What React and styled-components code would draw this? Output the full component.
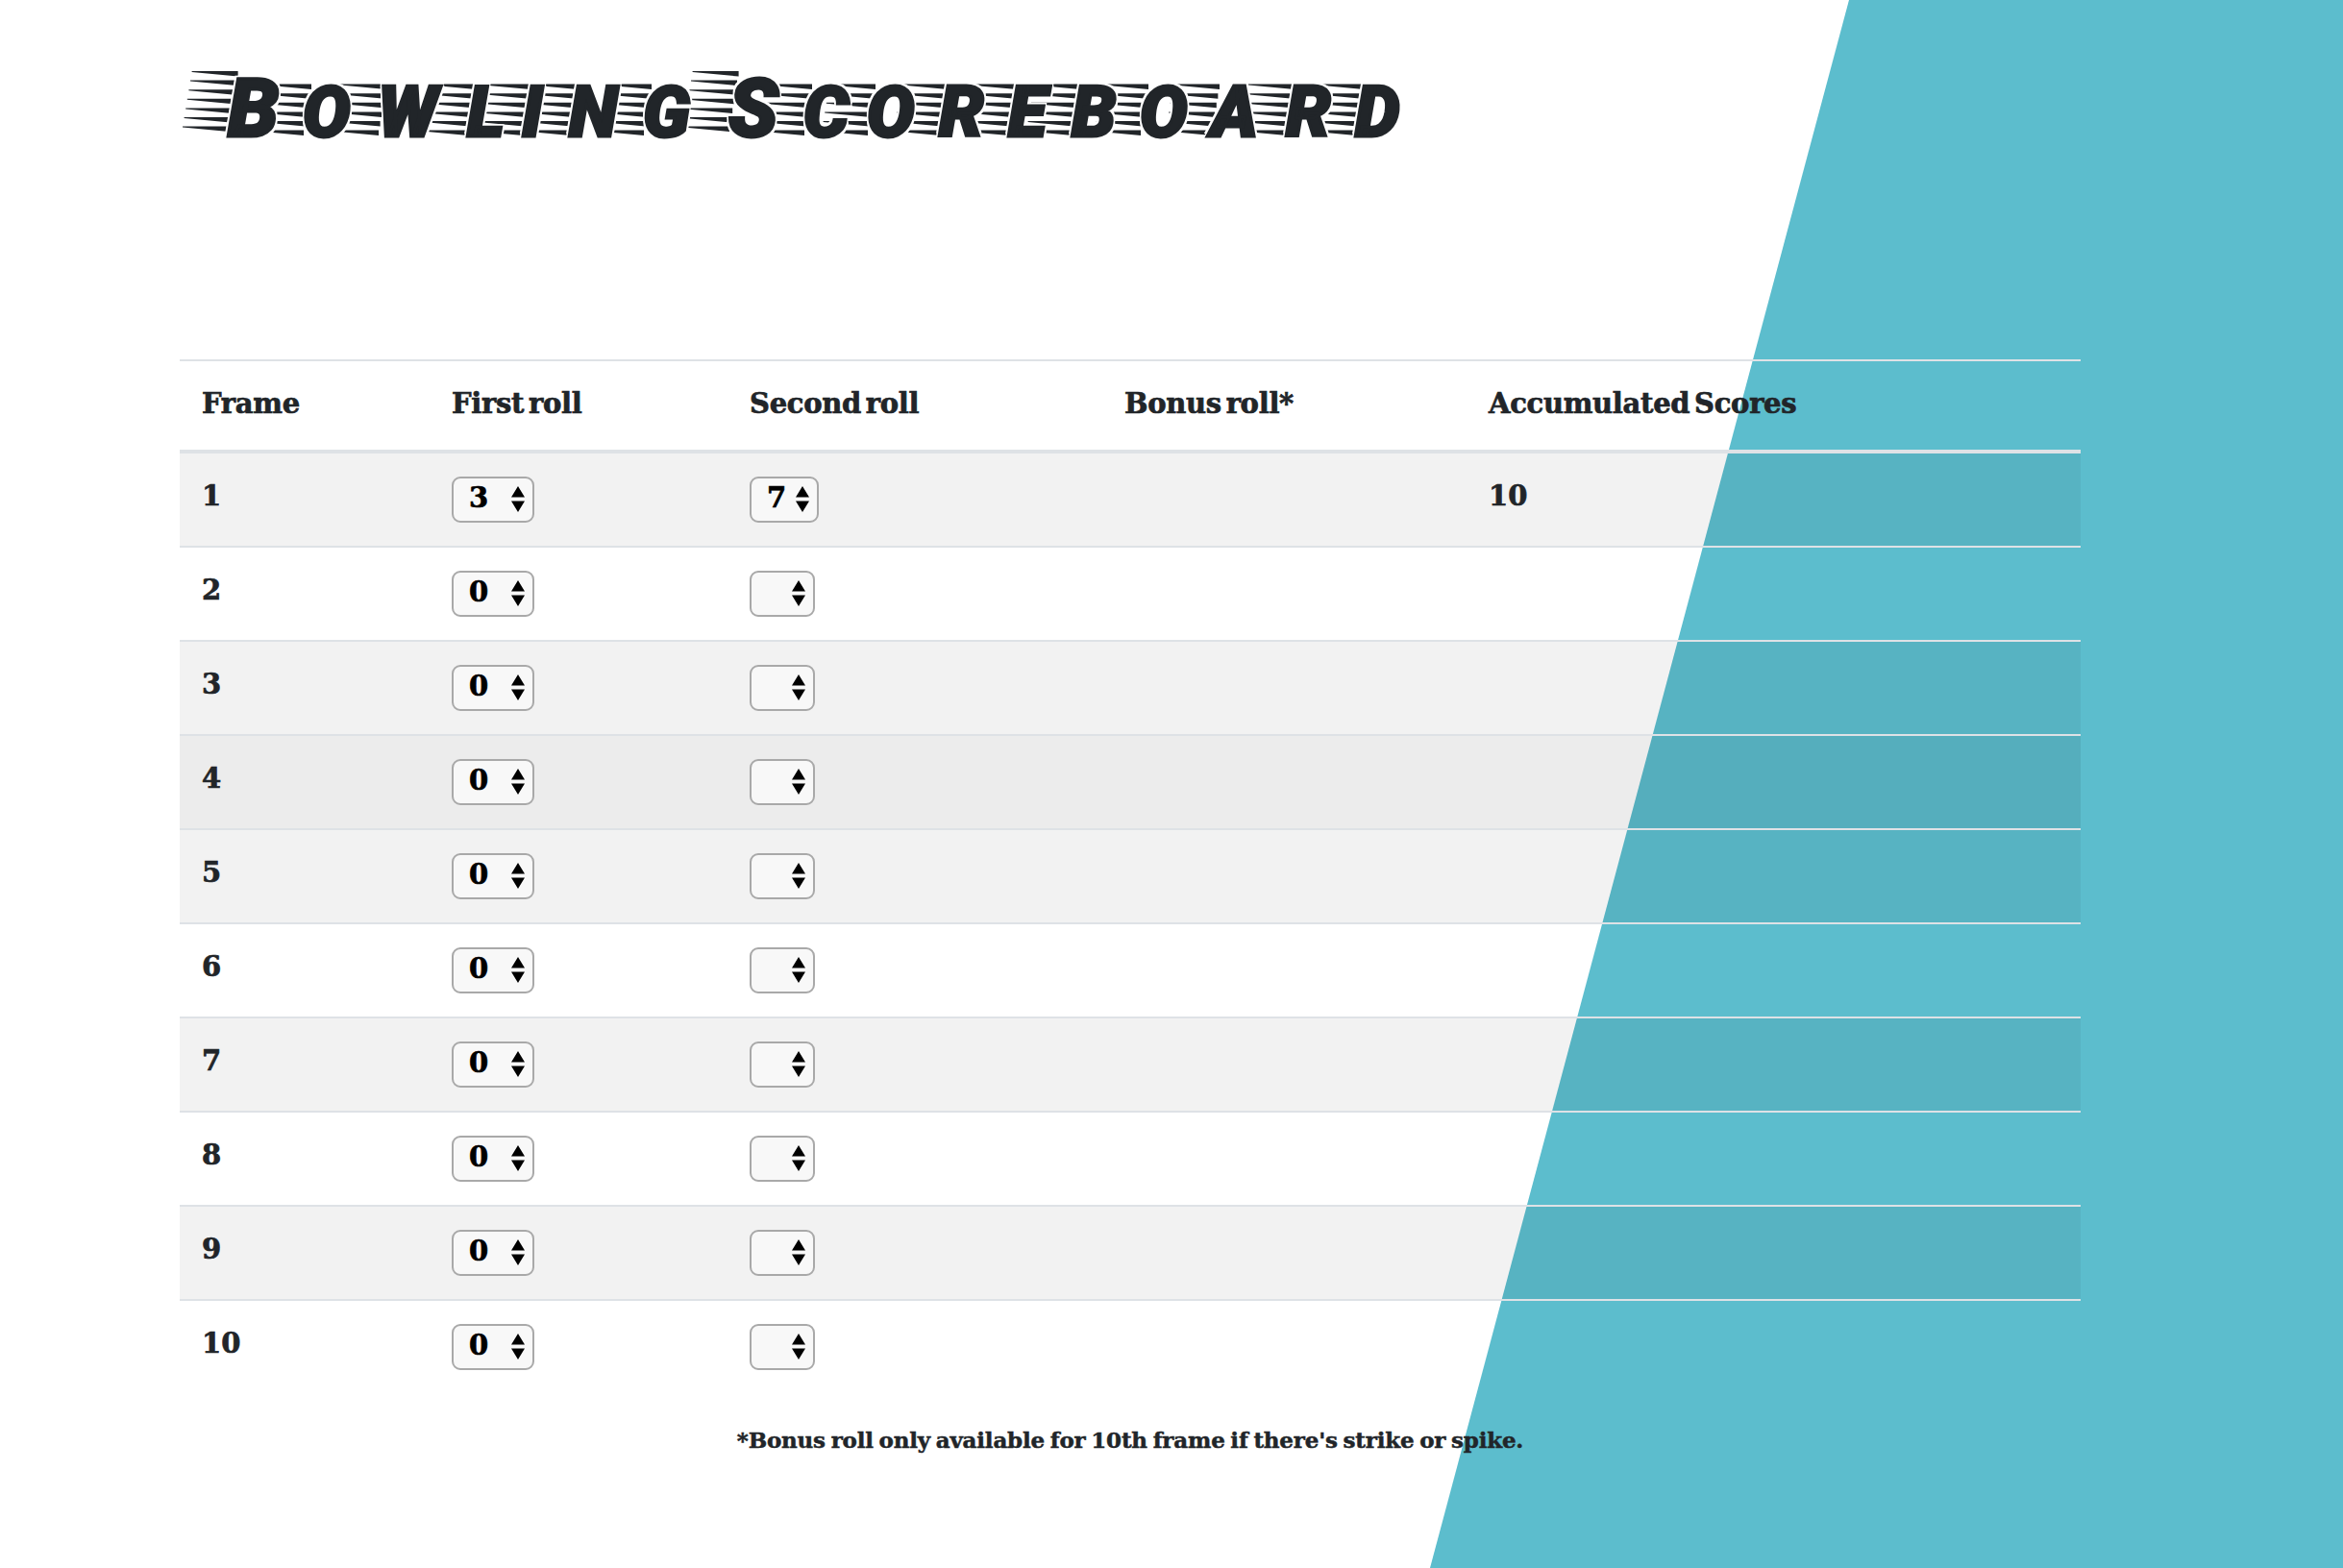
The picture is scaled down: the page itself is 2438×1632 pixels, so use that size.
import React from 'react';
import styled, { createGlobalStyle } from 'styled-components';

const GlobalStyle = createGlobalStyle`
	html, body {
		margin: 0;
		padding: 0;
		background: #fff;
	}
`

const Page = styled.div`
	position: relative;
	box-sizing: border-box;
	width: 2438px;
	height: 1632px;
	padding: 0 273px 0 187px;
	overflow: hidden;
	font-family: "DejaVu Serif", "Liberation Serif", serif;
	font-weight: 700;
	color: #212529;
	isolation: isolate;
	&:before {
		content: "";
		position: absolute;
		inset: 0;
		z-index: -1;
		background: #5cbdcd;
		clip-path: polygon(1924px 0, 2438px 0, 2438px 1632px, 1488px 1632px);
	}
`

const Title = styled.h1`
	display: flex;
	align-items: baseline;
	box-sizing: border-box;
	height: 374px;
	margin: 0;
	padding: 63px 0 0 50px;
	isolation: isolate;
	font-family: Roboto, "Liberation Sans", sans-serif;
	font-weight: 900;
	font-style: italic;
	line-height: 100px;
	color: #212529;
`

const Letter = styled.span`
	position: relative;
	display: inline-block;
	flex: none;
	width: ${props => props.$advance}px;
	font-size: ${props => props.$small ? 74 : 85}px;
`

const Glyph = styled.span`
	position: relative;
	z-index: 1;
	-webkit-text-stroke: 3px #212529;
	text-shadow: 3px 0 #fff, -3px 0 #fff, 0 3px #fff, 0 -3px #fff, 3px 3px #fff, -3px 3px #fff, 3px -3px #fff, -3px -3px #fff;
`

const Streaks = styled.svg`
	position: absolute;
	left: -47px;
	bottom: 21px;
	z-index: 0;
	width: 66px;
	height: 70px;
`

const WordGap = styled.span`
	flex: none;
	width: ${props => props.$width}px;
	white-space: pre;
`

const Table = styled.table`
	width: 1978px;
	table-layout: fixed;
	border-collapse: separate;
	border-spacing: 0;
`

const HeadCell = styled.th`
	box-sizing: border-box;
	height: 98px;
	padding: 24px 23px 0;
	border-top: 2px solid #dee2e6;
	border-bottom: 4px solid #dee2e6;
	text-align: left;
	vertical-align: top;
	font-size: 29px;
	line-height: 40px;
	letter-spacing: -0.3px;
	word-spacing: -5px;
	-webkit-text-stroke: 0.7px #212529;
`

const Row = styled.tr`
	background: ${props => props.$shade ? `rgba(0, 0, 0, ${props.$shade})` : 'transparent'};
`

const Cell = styled.td`
	box-sizing: border-box;
	height: ${props => props.$last ? 96 : 98}px;
	padding: 24px 23px 0;
	border-bottom: ${props => props.$last ? 'none' : '2px solid #dee2e6'};
	vertical-align: top;
	font-size: 29px;
	line-height: 40px;
	-webkit-text-stroke: 0.7px #212529;
`

const RollBox = styled.div`
	position: relative;
	width: ${props => props.$width}px;
	height: 48px;
`

const RollSelect = styled.select`
	appearance: none;
	display: block;
	box-sizing: border-box;
	width: 100%;
	height: 48px;
	margin: 0;
	padding: 0 0 5px 16px;
	border: 2px solid #a9a9a9;
	border-radius: 9px;
	background: #f8f8f8;
	font-family: "DejaVu Serif", "Liberation Serif", serif;
	font-weight: 700;
	font-size: 29px;
	color: #000;
	-webkit-text-stroke: 0.7px #000;
`

const Arrows = styled.svg`
	position: absolute;
	top: 10px;
	right: ${props => props.$right}px;
	width: 14px;
	height: 27px;
	pointer-events: none;
`

const Footnote = styled.p`
	margin: 30px 0 0;
	text-align: center;
	font-size: 23px;
	line-height: 38px;
	letter-spacing: -0.2px;
	word-spacing: -2px;
	-webkit-text-stroke: 0.5px #212529;
`

const titleWords = [
	[['B', 78], ['o', 78, 1], ['w', 93, 1], ['l', 57, 1], ['i', 49, 1], ['n', 77, 1], ['g', 69, 1]],
	[['S', 78], ['c', 66, 1], ['o', 75, 1], ['r', 72, 1], ['e', 66, 1], ['b', 71, 1], ['o', 74, 1], ['a', 78, 1], ['r', 72, 1], ['d', 60, 1]]
]

const streakRows = [0, 1, 2, 3, 4, 5, 6]

function Streak({ small }) {
	const rows = small ? streakRows.slice(1) : streakRows
	return (
		<Streaks viewBox="0 0 66 70" aria-hidden="true">
			{rows.map(i => {
				// the rows lean with the italic letters
				const y = 2 + i * 9.6
				const lean = (6 - i) * 1.6
				return <polygon key={i} points={`${lean},${y} ${lean + 48},${y} ${lean + 48},${y + 5.5} ${lean},${y + 1}`} fill="#212529" />
			})}
		</Streaks>
	)
}

function Roll({ value, width, right }) {
	return (
		<RollBox $width={width}>
			<RollSelect defaultValue={value}>
				{value !== undefined && <option value={value}>{value}</option>}
			</RollSelect>
			<Arrows $right={right} viewBox="0 0 14 27" aria-hidden="true">
				<path d="M7 0L14 11.5H0Z M0 15.5H14L7 27Z" fill="#000" />
			</Arrows>
		</RollBox>
	)
}

const frames = [1, 2, 3, 4, 5, 6, 7, 8, 9, 10]

const shadeFor = frame => {
	if (frame === 4) return 0.075
	return frame % 2 === 1 ? 0.05 : 0
}

export default function App() {
	return (
		<Page>
			<GlobalStyle />
			<Title>
				{titleWords.map((word, w) => (
					<React.Fragment key={w}>
						{w > 0 && <WordGap $width={20}> </WordGap>}
						{word.map(([char, advance, small], i) => (
							<Letter key={i} $advance={advance} $small={small}>
								<Streak small={small} />
								<Glyph>{char.toUpperCase()}</Glyph>
							</Letter>
						))}
					</React.Fragment>
				))}
			</Title>
			<Table>
				<colgroup>
					<col style={{ width: 260 }} />
					<col style={{ width: 310 }} />
					<col style={{ width: 390 }} />
					<col style={{ width: 379 }} />
					<col style={{ width: 639 }} />
				</colgroup>
				<thead>
					<tr>
						<HeadCell>Frame</HeadCell>
						<HeadCell>First roll</HeadCell>
						<HeadCell>Second roll</HeadCell>
						<HeadCell>Bonus roll*</HeadCell>
						<HeadCell>Accumulated Scores</HeadCell>
					</tr>
				</thead>
				<tbody>
					{frames.map(frame => {
						const first = frame === 1
						const last = frame === 10
						return (
							<Row key={frame} $shade={shadeFor(frame)}>
								<Cell $last={last}>{frame}</Cell>
								<Cell $last={last}><Roll value={first ? 3 : 0} width={86} right={10} /></Cell>
								<Cell $last={last}>
									{first ? <Roll value={7} width={72} right={10} /> : <Roll width={68} right={10} />}
								</Cell>
								<Cell $last={last} />
								<Cell $last={last}>{first ? 10 : ''}</Cell>
							</Row>
						)
					})}
				</tbody>
			</Table>
			<Footnote>*Bonus roll only available for 10th frame if there's strike or spike.</Footnote>
		</Page>
	)
}
